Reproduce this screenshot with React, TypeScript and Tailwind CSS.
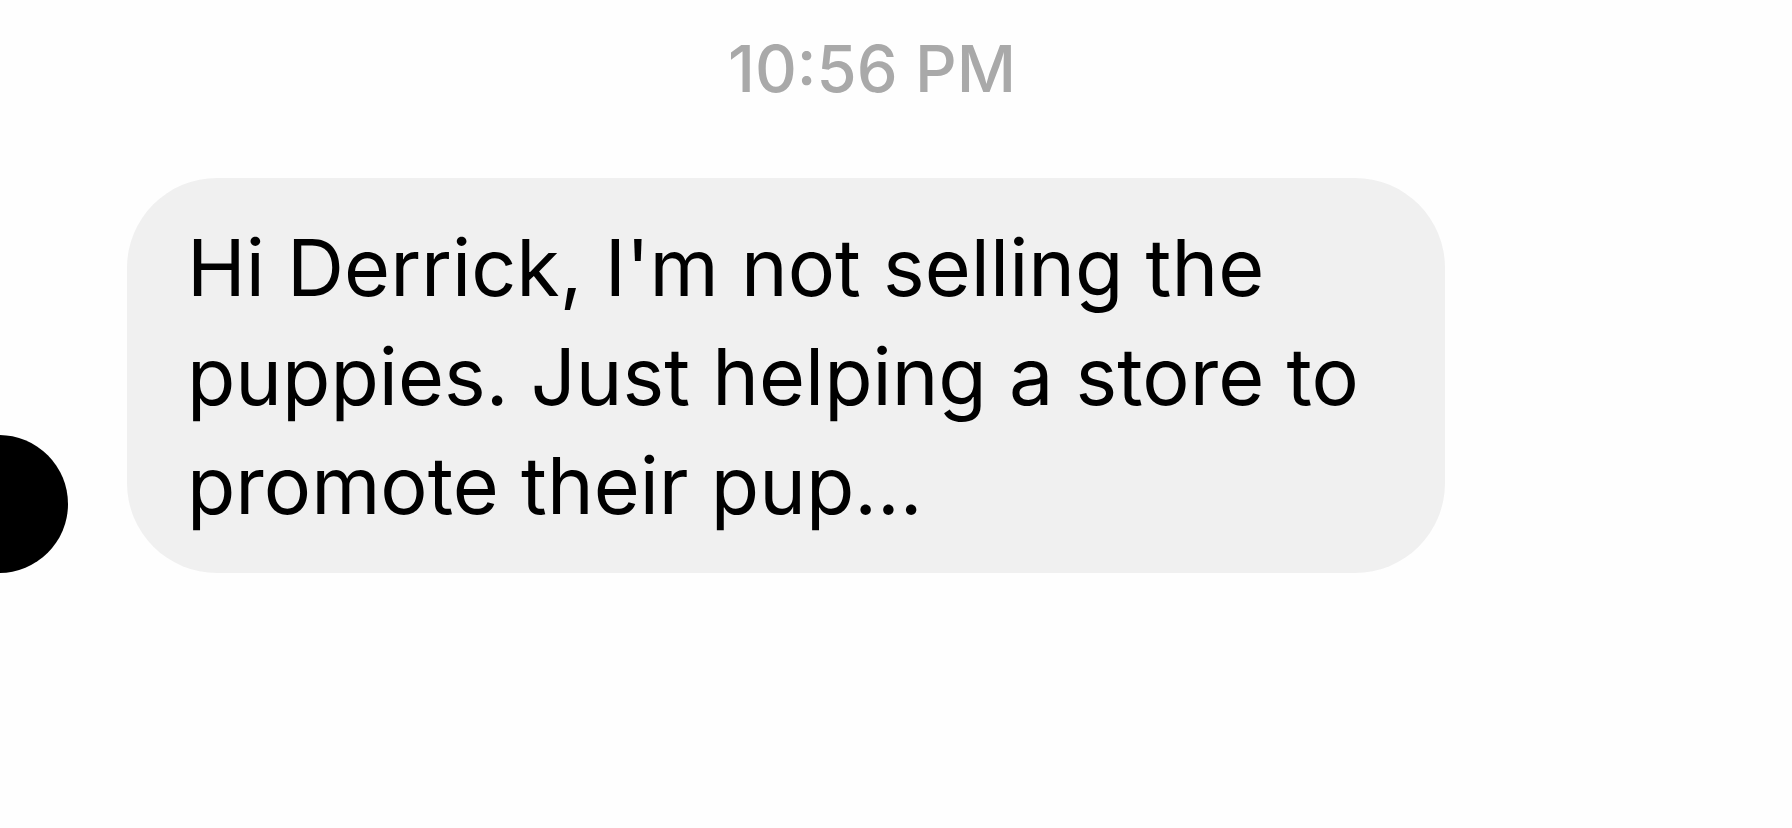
interface Message {
  id: number;
  lines: string[];
}

const messages: Message[] = [
  {
    id: 1,
    lines: [
      "Hi Derrick, I'm not selling the",
      "puppies. Just helping a store to",
      "promote their pup...",
    ],
  },
];

function Timestamp({ time }: { time: string }) {
  return (
    <time className="block pr-12 text-center text-[65px] leading-[72px] font-medium text-[#a9a9a9]">
      {time}
    </time>
  );
}

function IncomingMessage({ message }: { message: Message }) {
  return (
    <li className="flex items-end gap-[59px]">
      {/* Avatar, half scrolled off the left edge */}
      <div className="-ml-[70px] size-[138px] shrink-0 rounded-full bg-black" />
      <p className="rounded-[90px] bg-[#f0f0f0] pt-[35px] pr-[86px] pb-[33px] pl-[60px] text-[79px] leading-[109px] text-black">
        {message.lines.map((line) => (
          <span key={line} className="block whitespace-nowrap">
            {line}
          </span>
        ))}
      </p>
    </li>
  );
}

export default function App() {
  return (
    <main className="min-h-screen overflow-hidden bg-[#fefefe] pt-[33px] font-['Inter',sans-serif]">
      <Timestamp time="10:56 PM" />
      <ul className="mt-[73px]">
        {messages.map((message) => (
          <IncomingMessage key={message.id} message={message} />
        ))}
      </ul>
    </main>
  );
}
